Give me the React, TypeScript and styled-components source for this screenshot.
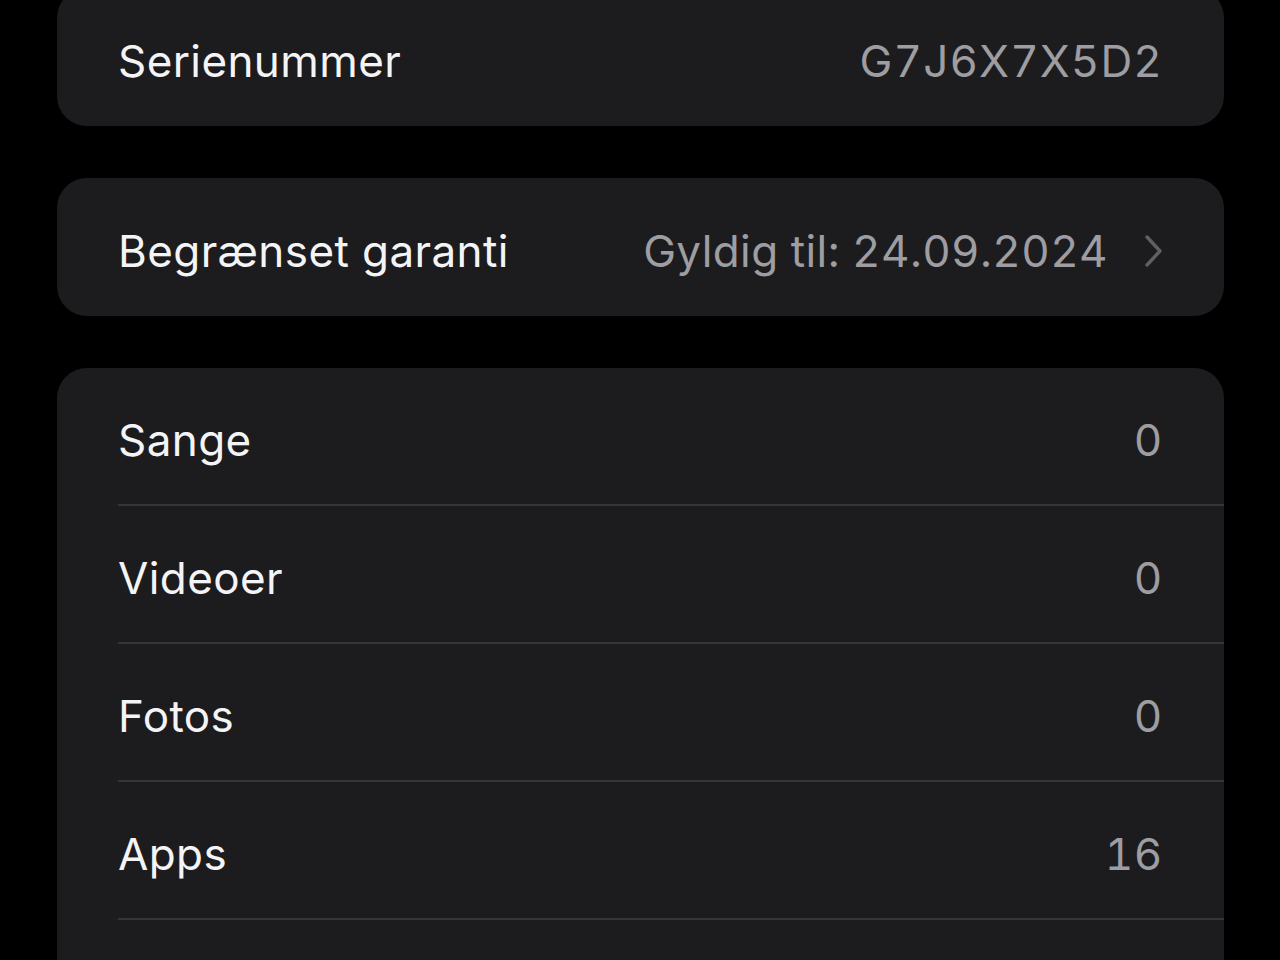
import React from "react";
import styled, { createGlobalStyle } from "styled-components";

const Global = createGlobalStyle`
  html, body { margin: 0; padding: 0; background: #000; }
  body { font-family: Inter, "Liberation Sans", Arial, sans-serif; overflow: hidden; }
`;

const Page = styled.div`
  display: flex;
  flex-direction: column;
  gap: 52px;
  padding: 0 56px 0 57px;
  margin-top: -12px;
  height: 972px;
  background: #000;
`;

const Card = styled.div`
  background: #1c1c1e;
  border-radius: 30px;
  overflow: hidden;
  flex-shrink: 0;
`;

const Row = styled.div`
  display: flex;
  align-items: center;
  height: 138px;
  padding-left: 61px;
  box-sizing: border-box;
`;

const RowInner = styled.div<{ $sep?: boolean }>`
  flex: 1;
  height: 100%;
  display: flex;
  align-items: center;
  justify-content: space-between;
  padding-right: 61px;
  padding-top: 8px;
  box-sizing: border-box;
  border-bottom: ${(p) => (p.$sep ? "2px solid #353538" : "none")};
`;

const Label = styled.span`
  color: #f4f4f6;
  font-size: 44px;
  font-weight: 400;
  letter-spacing: 0.4px;
`;

const Value = styled.span<{ $spacing?: number }>`
  display: flex;
  align-items: center;
  gap: 36px;
  color: #9d9da2;
  font-size: 44px;
  font-weight: 400;
  font-variant-numeric: tabular-nums;
  letter-spacing: ${(p) => p.$spacing ?? 0.6}px;
`;

const Chevron = () => (
  <svg width="19" height="34" viewBox="0 0 19 34" fill="none">
    <path d="M3 3 L16 17 L3 31" stroke="#5f5f64" strokeWidth="3.4" strokeLinecap="round" strokeLinejoin="round" />
  </svg>
);

type Item = { label: string; value: string; chevron?: boolean; spacing?: number };

const InfoCard = ({ items }: { items: Item[] }) => (
  <Card>
    {items.map((it, i) => (
      <Row key={it.label}>
        <RowInner $sep={i < items.length - 1}>
          <Label>{it.label}</Label>
          <Value $spacing={it.spacing}>
            {it.value}
            {it.chevron && <Chevron />}
          </Value>
        </RowInner>
      </Row>
    ))}
  </Card>
);

export default function App() {
  return (
    <>
      <Global />
      <Page>
        <InfoCard items={[{ label: "Serienummer", value: "G7J6X7X5D2", spacing: 1.1 }]} />
        <InfoCard items={[{ label: "Begrænset garanti", value: "Gyldig til: 24.09.2024", chevron: true, spacing: 0.4 }]} />
        <InfoCard
          items={[
            { label: "Sange", value: "0" },
            { label: "Videoer", value: "0" },
            { label: "Fotos", value: "0" },
            { label: "Apps", value: "16" },
            { label: "Kapacitet", value: "64 GB" },
          ]}
        />
      </Page>
    </>
  );
}
